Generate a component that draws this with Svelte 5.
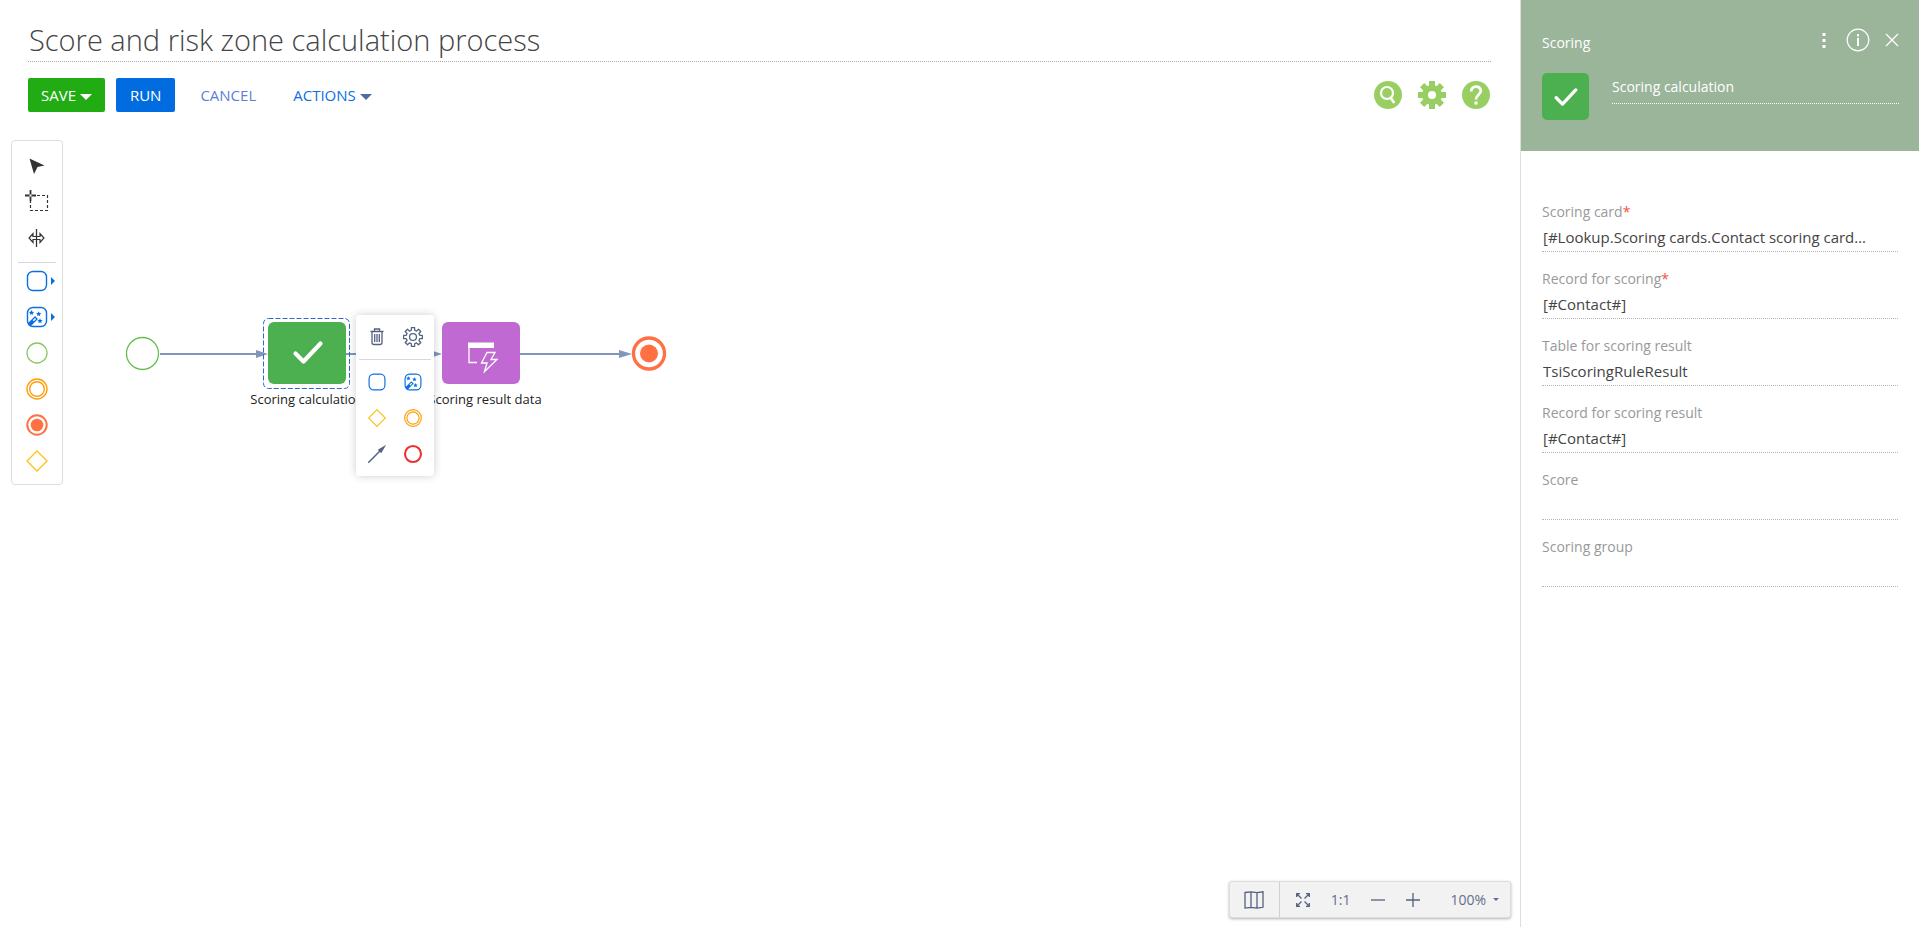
<script lang="ts">
  let processName = $state('Score and risk zone calculation process');
  let elementName = $state('Scoring calculation');

  let fields = $state([
    { id: 'scoring-card', label: 'Scoring card', required: true, value: '[#Lookup.Scoring cards.Contact scoring card…' },
    { id: 'record', label: 'Record for scoring', required: true, value: '[#Contact#]' },
    { id: 'result-table', label: 'Table for scoring result', required: false, value: 'TsiScoringRuleResult' },
    { id: 'result-record', label: 'Record for scoring result', required: false, value: '[#Contact#]' },
    { id: 'score', label: 'Score', required: false, value: '' },
    { id: 'group', label: 'Scoring group', required: false, value: '' }
  ]);

  const pointerTools = ['cursor', 'lasso', 'space'];
  const elementTools = ['task', 'wand', 'start', 'event', 'end', 'gateway'];
  const quickElements = ['task', 'wand', 'gateway', 'event', 'flow', 'terminate'];

  const toolNames: Record<string, string> = {
    cursor: 'Select',
    lasso: 'Select area',
    space: 'Add space',
    task: 'User action',
    wand: 'System action',
    start: 'Start event',
    event: 'Intermediate event',
    end: 'End event',
    gateway: 'Gateway',
    flow: 'Flow',
    terminate: 'Terminate'
  };
</script>

{#snippet check()}
  <path d="M2.500 12.500l8 8L27.500 2.500" fill="none" stroke="#fff" stroke-width="4.200" stroke-linecap="round" stroke-linejoin="round" />
{/snippet}

{#snippet icon(name)}
  <svg class="icon" viewBox="0 0 24 24" aria-hidden="true">
    {#if name === 'cursor'}
      <path d="M4.500 4.500L19.500 11.500L12.500 13L9 20Z" fill="#333" />
    {:else if name === 'lasso'}
      <path d="M12 5.500H22.500V20.500H5.500V11" fill="none" stroke="#333" stroke-dasharray="3 2" stroke-width="1.200" />
      <path d="M5.500 0v11M0 5.500h11" stroke="#333" stroke-width="1.800" />
      <rect x="4.500" y="4.500" width="2" height="2" fill="#fff" />
    {:else if name === 'space'}
      <path d="M11.500 3v18" stroke="#333" stroke-width="1.300" />
      <path d="M10 10.500H8V7.500L4 12l4 4.500V13.500h7v3L19 12l-4-4.500v3H10" fill="none" stroke="#333" stroke-width="1.200" />
    {:else if name === 'task'}
      <rect x="2.500" y="2.500" width="19" height="19" rx="5.500" fill="none" stroke="#0b6fe0" stroke-width="1.400" />
    {:else if name === 'wand'}
      <rect x="2.500" y="2.500" width="19" height="19" rx="5.500" fill="none" stroke="#0b6fe0" stroke-width="1.400" />
      <path d="M4 20L11.500 12.500" stroke="#0b6fe0" stroke-width="4" />
      <path d="M8.300 15.700l2.200-2.200" stroke="#fff" stroke-width="1.500" />
      <path d="M6.500 5l.8 1.700 1.800.2-1.300 1.300.3 1.800-1.600-.9-1.600.9.3-1.800-1.300-1.300 1.800-.2zM13.700 6.200l.8 1.700 1.800.2-1.300 1.300.3 1.800-1.600-.9-1.600.9.3-1.800-1.300-1.300 1.800-.2zM15 13.200l.8 1.700 1.800.2-1.300 1.300.3 1.800-1.600-.9-1.600.9.3-1.800-1.300-1.300 1.800-.2z" fill="#0b6fe0" />
    {:else if name === 'start'}
      <circle cx="12" cy="12" r="10" fill="none" stroke="#8cc665" stroke-width="1.300" />
    {:else if name === 'event'}
      <circle cx="12" cy="12" r="10" fill="none" stroke="#ff9d0a" stroke-width="1.400" />
      <circle cx="12" cy="12" r="7.300" fill="none" stroke="#ff9d0a" stroke-width="1.400" />
    {:else if name === 'end'}
      <circle cx="12" cy="12" r="9.700" fill="none" stroke="#ff7043" stroke-width="2" />
      <circle cx="12" cy="12" r="6.300" fill="#ff7043" />
    {:else if name === 'gateway'}
      <path d="M12 2L22 12L12 22L2 12Z" fill="none" stroke="#fbc31c" stroke-width="1.400" />
    {:else if name === 'flow'}
      <path d="M1.500 22.500L17 7" stroke="#54627f" stroke-width="1.800" />
      <path d="M23 1L13 7L17 11Z" fill="#54627f" />
    {:else if name === 'terminate'}
      <circle cx="12" cy="12" r="9.600" fill="none" stroke="#ee2f32" stroke-width="2.500" />
    {/if}
  </svg>
{/snippet}

<div class="designer">
  <main class="workspace">
    <header class="top">
      <input class="process-name" aria-label="Process name" bind:value={processName} />
      <div class="actions">
        <button class="btn save">SAVE <span class="caret"></span></button>
        <button class="btn run">RUN</button>
        <button class="btn cancel">CANCEL</button>
        <button class="btn more">ACTIONS <span class="caret"></span></button>
        <div class="round-actions">
          <button class="plain" aria-label="Search">
            <svg width="28" height="28" viewBox="0 0 28 28">
              <circle cx="14" cy="14" r="14" fill="#99cf62" />
              <circle cx="13" cy="12" r="6" fill="none" stroke="#fff" stroke-width="2.200" />
              <path d="M16.500 16.500l3.800 5.500" stroke="#fff" stroke-width="2.600" />
            </svg>
          </button>
          <button class="plain" aria-label="Settings">
            <svg width="28" height="28" viewBox="0 0 28 28">
              <circle cx="14" cy="14" r="10" fill="#99cf62" />
              {#each [0, 45, 90, 135] as angle}
                <rect x="11" y="0" width="6" height="28" fill="#99cf62" transform="rotate({angle} 14 14)" />
              {/each}
              <circle cx="14" cy="14" r="4" fill="#fff" />
            </svg>
          </button>
          <button class="plain" aria-label="Help">
            <svg width="28" height="28" viewBox="0 0 28 28">
              <circle cx="14" cy="14" r="14" fill="#99cf62" />
              <path d="M9.200 10.500C9.200 4 18.800 4 18.800 10C18.800 13.500 14 13.500 14 18.500" fill="none" stroke="#fff" stroke-width="2.700" />
              <rect x="12.500" y="20.500" width="3" height="3" fill="#fff" />
            </svg>
          </button>
        </div>
      </div>
    </header>

    <section class="canvas">
      <div class="toolbox">
        {#each pointerTools as tool}
          <button class="plain tool" aria-label={toolNames[tool]}>{@render icon(tool)}</button>
        {/each}
        <hr />
        {#each elementTools as tool}
          <button class="plain tool" class:expandable={tool === 'task' || tool === 'wand'} aria-label={toolNames[tool]}>
            {@render icon(tool)}
          </button>
        {/each}
      </div>

      <svg class="diagram" width="700" height="200" viewBox="0 0 700 200">
        <g stroke="#8196b8" stroke-width="2">
          <path d="M160 74H258M346 74H432M520 74H622" />
        </g>
        <path d="M256 70l12 4-12 4zM430 70l12 4-12 4zM619 70l13 4-13 4z" fill="#8196b8" />
        <circle cx="142.500" cy="73.500" r="16" fill="#fff" stroke="#62c04b" stroke-width="1.300" />

        <rect x="263.500" y="38.500" width="86" height="70" rx="5" fill="none" stroke="#2f66cf" stroke-dasharray="5 2" />
        <rect x="268" y="42" width="78" height="62" rx="6" fill="#4caf50" />
        <g transform="translate(293 61)">{@render check()}</g>
        <text x="307" y="124">Scoring calculation</text>

        <rect x="442" y="42" width="78" height="62" rx="6" fill="#c069d2" />
        <path d="M468 62.500h26v5.500h-26z" fill="#fff" />
        <path d="M469 66v16.500h8" fill="none" stroke="#fff" stroke-width="1.300" />
        <path d="M487 72.500h8l-4 7h6L484.500 91.500l2.500-8.500h-5.500z" fill="#c069d2" stroke="#fff" stroke-width="1.300" />
        <text x="485" y="124">Scoring result data</text>

        <circle cx="649" cy="73.500" r="15.500" fill="#fff" stroke="#ff7043" stroke-width="3.300" />
        <circle cx="649" cy="73.500" r="9" fill="#ff7043" />
      </svg>

      <div class="quick-menu">
        <div class="quick-row">
          <button class="plain quick" aria-label="Delete">
            <svg class="icon" viewBox="2 2 20 20" fill="none" stroke="#54627f" stroke-width="1.300">
              <path d="M5.500 6.500h13M9.500 6V4h5v2M7 7v10.500q0 2 2 2h6q2 0 2-2V7M9.700 9v8M12 9v8M14.300 9v8" />
            </svg>
          </button>
          <button class="plain quick" aria-label="Element settings">
            <svg class="icon" viewBox="1 1.800 22 22" fill="none" stroke="#54627f" stroke-width="1.400" stroke-linejoin="round">
              <path d="M10.200 2.500h3.600v2.900l2.100.9 2.100-2.100 2.600 2.600-2.100 2.100.9 2.100h2.900v3.600h-2.900l-.9 2.100 2.100 2.100-2.600 2.600-2.100-2.100-2.100.9v2.900h-3.600v-2.900l-2.100-.9-2.100 2.100-2.600-2.600 2.100-2.100-.9-2.100H1.700v-3.600h2.900l.9-2.100-2.100-2.100 2.600-2.600 2.100 2.100 2.100-.9z" />
              <circle cx="12" cy="12.800" r="3.800" />
            </svg>
          </button>
        </div>
        <hr />
        <div class="quick-grid">
          {#each quickElements as tool}
            <button class="plain quick" aria-label={toolNames[tool]}>{@render icon(tool)}</button>
          {/each}
        </div>
      </div>

      <div class="zoom-bar">
        <button class="plain map" aria-label="Mini map">
          <svg width="20" height="18" viewBox="0 0 20 18" fill="none" stroke="#54627f" stroke-width="1.300">
            <path d="M1 1.500L7 .8l6 .8 6-.8v15.500l-6 .8-6-.8-6 .8zM7 1v15M13 2v15" />
          </svg>
        </button>
        <button class="plain" aria-label="Fit to screen">
          <svg width="14" height="14" viewBox="0 0 14 14" fill="none" stroke="#54627f" stroke-width="1.300">
            <path d="M.7 4V.7H4M10 .7h3.300V4M13.300 10v3.300H10M4 13.300H.7V10M1 1l4.500 4.500M13 1L8.500 5.500M13 13L8.500 8.500M1 13l4.500-4.500" />
          </svg>
        </button>
        <button class="plain">1:1</button>
        <button class="plain" aria-label="Zoom out">
          <svg width="14" height="14" viewBox="0 0 14 14" stroke="#54627f" stroke-width="1.300"><path d="M0 7h14" /></svg>
        </button>
        <button class="plain" aria-label="Zoom in">
          <svg width="14" height="14" viewBox="0 0 14 14" stroke="#54627f" stroke-width="1.300"><path d="M0 7h14M7 0v14" /></svg>
        </button>
        <button class="plain level">100% <span class="caret"></span></button>
      </div>
    </section>
  </main>

  <aside class="properties">
    <header class="element-header">
      <div class="element-title">
        <h2>Scoring</h2>
        <button class="plain" aria-label="More">
          <svg width="4" height="16" viewBox="0 0 4 16" fill="#fff"><path d="M.5 1h3v3h-3zM.5 7h3v3h-3zM.5 13h3v3h-3z" /></svg>
        </button>
        <button class="plain" aria-label="Information">
          <svg width="24" height="24" viewBox="0 0 24 24">
            <circle cx="12" cy="12" r="10.800" fill="none" stroke="#fff" stroke-width="1.200" />
            <path d="M11 6h2v2.500h-2zM11 10h2v8h-2z" fill="#fff" />
          </svg>
        </button>
        <button class="plain close" aria-label="Close">
          <svg width="14" height="14" viewBox="0 0 14 14" stroke="#fff" stroke-width="1.300"><path d="M1 1l12 12M13 1L1 13" /></svg>
        </button>
      </div>
      <div class="element-name">
        <span class="badge">
          <svg width="24" height="18" viewBox="0 0 30 23" aria-hidden="true">{@render check()}</svg>
        </span>
        <input aria-label="Element name" bind:value={elementName} />
      </div>
    </header>

    <form class="fields">
      {#each fields as field}
        <div class="field">
          <label for={field.id}>{field.label}{#if field.required}<span class="required">*</span>{/if}</label>
          <input id={field.id} bind:value={field.value} />
        </div>
      {/each}
    </form>
  </aside>
</div>

<style>
  :global(body) {
    margin: 0;
    background: #fff;
  }

  .designer {
    display: flex;
    min-height: 100vh;
    font-family: 'Open Sans', sans-serif;
    font-size: 14px;
    color: #444;
  }

  input {
    box-sizing: border-box;
    min-width: 0;
    border: none;
    border-radius: 0;
    background: none;
    font: inherit;
    color: inherit;
    outline: none;
  }

  button {
    font: inherit;
    cursor: pointer;
  }

  svg {
    display: block;
    flex: none;
  }

  hr {
    width: 100%;
    margin: 0;
    border: none;
    border-top: 1px solid #d8d8d8;
  }

  .plain {
    display: flex;
    align-items: center;
    justify-content: center;
    padding: 0;
    border: none;
    background: none;
    color: inherit;
  }

  .workspace {
    display: flex;
    flex: 1;
    flex-direction: column;
    min-width: 0;
  }

  .top {
    padding: 18px 29px 0 28px;
  }

  .process-name {
    display: block;
    width: 100%;
    height: 44px;
    padding: 0 1px;
    border-bottom: 1px dotted #aaa;
    font-size: 29px;
    font-weight: 300;
  }

  .actions {
    display: flex;
    align-items: center;
    margin-top: 16px;
  }

  .btn {
    height: 34px;
    padding: 0 14px;
    border: none;
    border-radius: 2px;
    background: none;
    font-size: 15px;
  }

  .save {
    padding: 0 13px;
    background: #22ac14;
    color: #fff;
  }

  .run {
    margin-left: 11px;
    background: #006ce0;
    color: #fff;
  }

  .cancel {
    margin-left: 11px;
    color: #5b7fd4;
  }

  .more {
    margin-left: 9px;
    color: #0b70de;
  }

  .caret {
    display: inline-block;
    border: 6px solid transparent;
    border-top-color: currentColor;
    border-bottom: none;
    vertical-align: middle;
  }

  .more .caret {
    border-top-color: #4f6ca5;
  }

  .round-actions {
    display: flex;
    gap: 16px;
    margin: 0 1px 0 auto;
  }

  .canvas {
    position: relative;
    flex: 1;
    padding: 28px 11px;
  }

  .toolbox {
    display: flex;
    flex-direction: column;
    align-items: center;
    box-sizing: border-box;
    width: 52px;
    padding: 7px 6px 5px;
    border: 1px solid #ddd;
    border-radius: 4px;
  }

  .tool {
    position: relative;
    width: 36px;
    height: 36px;
  }

  .toolbox hr {
    margin: 6px 0 0;
  }

  .expandable::after {
    content: '';
    position: absolute;
    right: 0;
    border: 4px solid transparent;
    border-left-color: #0b6fe0;
    border-right: none;
  }

  .icon {
    width: 24px;
    height: 24px;
  }

  .diagram {
    position: absolute;
    top: 168px;
    left: 0;
  }

  .diagram text {
    fill: #222;
    font-size: 13px;
    text-anchor: middle;
  }

  .quick-menu {
    position: absolute;
    top: 203px;
    left: 356px;
    box-sizing: border-box;
    width: 78px;
    padding: 4px 3px;
    border-radius: 4px;
    background: rgba(255, 255, 255, 0.96);
    box-shadow: 0 0 8px rgba(0, 0, 0, 0.2);
    backdrop-filter: blur(8px);
  }

  .quick-row,
  .quick-grid {
    display: grid;
    grid-template-columns: 36px 36px;
  }

  .quick-menu hr {
    margin: 4px 0;
  }

  .quick {
    height: 36px;
  }

  .quick .icon {
    width: 20px;
    height: 20px;
  }

  .zoom-bar {
    position: absolute;
    right: 9px;
    bottom: 9px;
    display: flex;
    align-items: center;
    gap: 21px;
    height: 35px;
    padding-right: 11px;
    border: 1px solid #ddd;
    border-radius: 3px;
    background: #f2f2f2;
    box-shadow: 0 1px 3px rgba(0, 0, 0, 0.3);
    color: #5f6f8d;
  }

  .map {
    width: 50px;
    height: 100%;
    margin-right: -5px;
    border-right: 1px solid #d0d0d0;
  }

  .level {
    gap: 7px;
    margin-left: 9px;
  }

  .zoom-bar .caret {
    border-width: 3px;
    border-bottom: none;
  }

  .properties {
    box-sizing: border-box;
    width: 399px;
    border-left: 1px solid #ddd;
  }

  .element-header {
    box-sizing: border-box;
    height: 151px;
    padding: 28px 20px 0 21px;
    background: #9bb59b;
    color: #fff;
  }

  .element-title {
    display: flex;
    align-items: center;
    gap: 20px;
  }

  .element-title h2 {
    flex: 1;
    margin: 0;
    padding-top: 4px;
    font-size: 14px;
    font-weight: 400;
  }

  .close {
    margin-left: -5px;
  }

  .element-name {
    display: flex;
    gap: 23px;
    margin-top: 21px;
  }

  .badge {
    display: flex;
    align-items: center;
    justify-content: center;
    width: 47px;
    height: 47px;
    border-radius: 5px;
    background: #4caf50;
  }

  .element-name input {
    flex: 1;
    height: 31px;
    padding: 0 0 4px;
    border-bottom: 1px dotted #fff;
  }

  .fields {
    padding: 51px 21px 0;
  }

  .field {
    display: flex;
    flex-direction: column;
    height: 67px;
  }

  label {
    line-height: 20px;
    color: #999;
  }

  .required {
    color: #f0543c;
  }

  .field input {
    height: 30px;
    padding: 0 1px;
    border-bottom: 1px dotted #b5b5b5;
    font-size: 15px;
  }
</style>
